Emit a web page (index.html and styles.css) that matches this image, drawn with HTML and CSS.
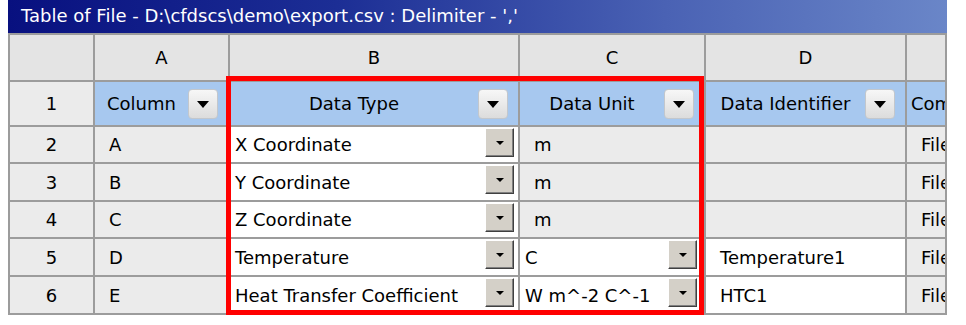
FILE: index.html
```html
<!DOCTYPE html>
<html lang="en">
<head>
    <meta charset="UTF-8">
    <title>Table of File</title>
    <link rel="stylesheet" href="styles.css">
</head>
<body>
    <div class="window">
        <div class="titlebar">Table of File - D:\cfdscs\demo\export.csv : Delimiter - ','</div>

        <div class="grid">
            <!-- column letters -->
            <div class="cell colhead"></div>
            <div class="cell colhead">A</div>
            <div class="cell colhead">B</div>
            <div class="cell colhead">C</div>
            <div class="cell colhead">D</div>
            <div class="cell colhead"></div>

            <!-- row 1: field headers -->
            <div class="cell rowhead">1</div>
            <div class="cell hdr"><span class="hdr-label">Column</span><span class="hdr-btn"></span></div>
            <div class="cell hdr"><span class="hdr-label">Data Type</span><span class="hdr-btn"></span></div>
            <div class="cell hdr"><span class="hdr-label">Data Unit</span><span class="hdr-btn"></span></div>
            <div class="cell hdr"><span class="hdr-label">Data Identifier</span><span class="hdr-btn"></span></div>
            <div class="cell hdr hdr-clip"><span>Combined</span></div>

            <!-- row 2 -->
            <div class="cell rowhead">2</div>
            <div class="cell text">A</div>
            <div class="cell combo"><span class="combo-label">X Coordinate</span><span class="combo-btn"></span></div>
            <div class="cell text">m</div>
            <div class="cell text"></div>
            <div class="cell text">File</div>

            <!-- row 3 -->
            <div class="cell rowhead">3</div>
            <div class="cell text">B</div>
            <div class="cell combo"><span class="combo-label">Y Coordinate</span><span class="combo-btn"></span></div>
            <div class="cell text">m</div>
            <div class="cell text"></div>
            <div class="cell text">File</div>

            <!-- row 4 -->
            <div class="cell rowhead">4</div>
            <div class="cell text">C</div>
            <div class="cell combo"><span class="combo-label">Z Coordinate</span><span class="combo-btn"></span></div>
            <div class="cell text">m</div>
            <div class="cell text"></div>
            <div class="cell text">File</div>

            <!-- row 5 -->
            <div class="cell rowhead">5</div>
            <div class="cell text">D</div>
            <div class="cell combo"><span class="combo-label">Temperature</span><span class="combo-btn"></span></div>
            <div class="cell combo combo-unit"><span class="combo-label">C</span><span class="combo-btn"></span></div>
            <div class="cell text white">Temperature1</div>
            <div class="cell text">File</div>

            <!-- row 6 -->
            <div class="cell rowhead">6</div>
            <div class="cell text">E</div>
            <div class="cell combo"><span class="combo-label">Heat Transfer Coefficient</span><span class="combo-btn"></span></div>
            <div class="cell combo combo-unit"><span class="combo-label">W m^-2 C^-1</span><span class="combo-btn"></span></div>
            <div class="cell text white">HTC1</div>
            <div class="cell text">File</div>
        </div>

        <!-- red annotation frame over columns B and C -->
        <div class="highlight"></div>
    </div>
</body>
</html>
```

FILE: styles.css
```css
body {
    margin: 0 0 0 8px;
    font-family: "DejaVu Sans", Verdana, sans-serif;
    font-size: 18px;
    color: #000;
    background: #fff;
}
.window {
    position: relative;
    width: 939px;
}
.titlebar {
    height: 33px;
    line-height: 32px;
    padding-left: 13px;
    color: #fff;
    font-size: 18px;
    white-space: nowrap;
    background: linear-gradient(to right, #08107f 0%, #1c2e95 35%, #4a62b4 70%, #6a86c8 100%);
}
.grid {
    display: grid;
    grid-template-columns: 83px 133px 288px 184px 199px 38px;
    grid-template-rows: 45px 43px 35px 36px 35px 36px 36px;
    gap: 2px;
    border: 2px solid #9c9c9c;
    background: #9c9c9c;
}
.cell {
    display: flex;
    align-items: center;
    overflow: hidden;
    white-space: nowrap;
    background: #ebebeb;
}
.colhead {
    justify-content: center;
    background: #e4e4e4;
}
.rowhead {
    justify-content: center;
}
.text {
    padding-left: 14px;
}
.white {
    background: #fff;
}

/* row 1: blue field headers with dropdown buttons */
.hdr {
    background: #a7c8ef;
    padding-right: 10px;
}
.hdr-label {
    flex: 1;
    text-align: center;
}
.hdr-btn {
    position: relative;
    width: 30px;
    height: 30px;
    box-sizing: border-box;
    border: 1px solid #c3c7cc;
    border-radius: 4px;
    background: linear-gradient(#f7f7f7, #dcdcdc);
}
.hdr-btn::after {
    content: "";
    position: absolute;
    left: 8px;
    top: 11px;
    border-left: 6px solid transparent;
    border-right: 6px solid transparent;
    border-top: 7px solid #000;
}
.hdr-clip {
    padding: 0 0 0 4px;
}

/* editable combo cells */
.combo {
    background: #fff;
    padding: 0 4px 0 5px;
}
.combo-label {
    flex: 1;
}
.combo-btn {
    position: relative;
    align-self: flex-start;
    margin-top: 1px;
    width: 29px;
    height: 29px;
    box-sizing: border-box;
    background: #d4d0c8;
    border-top: 1px solid #fff;
    border-left: 1px solid #fff;
    border-right: 1px solid #404040;
    border-bottom: 1px solid #404040;
    box-shadow: inset -1px -1px 0 #808080;
}
.combo-btn::after {
    content: "";
    position: absolute;
    left: 10px;
    top: 12px;
    border-left: 4px solid transparent;
    border-right: 4px solid transparent;
    border-top: 4px solid #000;
}
.combo-unit {
    padding-right: 7px;
}

.highlight {
    position: absolute;
    left: 218px;
    top: 76px;
    width: 478px;
    height: 239px;
    box-sizing: border-box;
    border: 5px solid #f00;
}
```
